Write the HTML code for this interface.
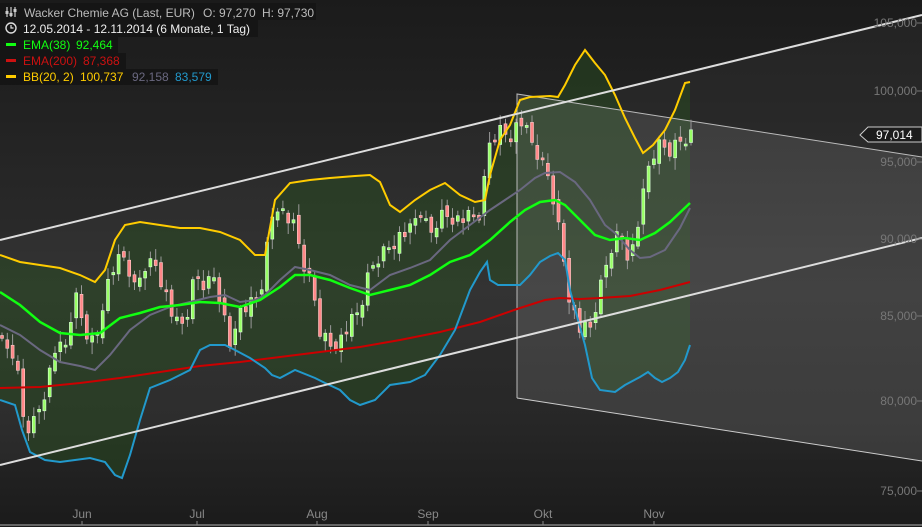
<!DOCTYPE html>
<html><head><meta charset="utf-8"><style>
html,body{margin:0;padding:0;width:922px;height:527px;overflow:hidden;background:#1c1c1c}
svg{display:block}
text{font-family:"Liberation Sans",sans-serif;font-size:12px}
</style></head><body>
<svg id="s" width="922" height="527" viewBox="0 0 922 527">
<defs>
<linearGradient id="bg" x1="0" y1="0" x2="0" y2="1">
<stop offset="0" stop-color="#1b1b1b"/><stop offset="0.55" stop-color="#2d2d2d"/><stop offset="0.8" stop-color="#272727"/><stop offset="1" stop-color="#1b1b1b"/>
</linearGradient>
</defs>
<rect width="922" height="527" fill="url(#bg)"/>
<polygon points="0,240 922,15 922,238 0,465" fill="rgba(255,255,255,0.03)"/>
<polygon id="bbfill" fill="rgba(40,80,30,0.45)"/>
<polygon points="517,94 922,157 922,461 517,398" fill="rgba(255,255,255,0.1)"/>
<polyline points="517,398 517,94 922,157" fill="none" stroke="#bbb" stroke-width="1"/>
<line x1="517" y1="398" x2="922" y2="461" stroke="#ccc" stroke-width="1"/>
<g id="candles"></g>
<polyline id="mid" fill="none" stroke="#6a6880" stroke-width="2"/>
<polyline id="ema200" fill="none" stroke="#c00" stroke-width="2"/>
<polyline id="ema38" fill="none" stroke="#1f1" stroke-width="2.5"/>
<polyline id="up" fill="none" stroke="#fc0" stroke-width="2"/>
<polyline id="lo" fill="none" stroke="#29c" stroke-width="2"/>
<line x1="0" y1="240" x2="922" y2="15" stroke="#ddd" stroke-width="2"/>
<line x1="0" y1="465" x2="922" y2="238" stroke="#ddd" stroke-width="2"/>
<g fill="#777" text-anchor="end">
<text x="917" y="27">105,000</text><text x="917" y="95">100,000</text>
<text x="917" y="166">95,000</text><text x="917" y="243">90,000</text>
<text x="917" y="320">85,000</text><text x="917" y="405">80,000</text>
<text x="917" y="495">75,000</text>
</g>
<g stroke="#777"><line x1="917" y1="23" x2="922" y2="23"/><line x1="917" y1="91" x2="922" y2="91"/><line x1="917" y1="162" x2="922" y2="162"/><line x1="917" y1="239" x2="922" y2="239"/><line x1="917" y1="316" x2="922" y2="316"/><line x1="917" y1="401" x2="922" y2="401"/><line x1="917" y1="491" x2="922" y2="491"/></g>
<polygon points="860,135 868,127 922,127 922,142 868,142" fill="#1c1c1c" stroke="#ccc"/>
<text x="876" y="139" fill="#fff">97,014</text>
<line x1="0" y1="525" x2="922" y2="525" stroke="#666" stroke-width="2"/>
<g fill="#888" text-anchor="middle">
<text x="82" y="518">Jun</text><text x="197" y="518">Jul</text><text x="317" y="518">Aug</text><text x="428" y="518">Sep</text><text x="543" y="518">Okt</text><text x="654" y="518">Nov</text>
</g>
<g stroke="#888"><line x1="82" y1="521" x2="82" y2="525"/><line x1="197" y1="521" x2="197" y2="525"/><line x1="317" y1="521" x2="317" y2="525"/><line x1="428" y1="521" x2="428" y2="525"/><line x1="543" y1="521" x2="543" y2="525"/><line x1="654" y1="521" x2="654" y2="525"/></g>
<g fill="rgba(20,20,20,0.85)">
<rect x="0" y="3" width="316" height="17"/><rect x="0" y="20" width="258" height="17"/>
<rect x="0" y="37" width="118" height="16"/><rect x="0" y="53" width="126" height="16"/><rect x="0" y="69" width="218" height="16"/>
</g>
<g stroke="#ccc" stroke-width="1.2"><line x1="7" y1="7" x2="7" y2="17"/><line x1="11" y1="7" x2="11" y2="17"/><line x1="15" y1="7" x2="15" y2="17"/></g>
<g fill="#ccc"><rect x="5.5" y="11" width="3" height="3"/><rect x="9.5" y="13" width="3" height="3"/><rect x="13.5" y="9" width="3" height="3"/></g>
<circle cx="11" cy="28" r="5" fill="none" stroke="#ddd" stroke-width="1.4"/>
<path d="M11 25 V28 H13.5" fill="none" stroke="#ddd" stroke-width="1.2"/>
<text y="17" fill="#bbb"><tspan x="24">Wacker Chemie AG (Last, EUR)</tspan><tspan x="203">O: 97,270</tspan><tspan x="262">H: 97,730</tspan></text>
<text x="23" y="33" fill="#eee">12.05.2014 - 12.11.2014 (6 Monate, 1 Tag)</text>
<rect x="6" y="43" width="10" height="3" fill="#1f1"/><text y="49" fill="#1f1"><tspan x="23">EMA(38)</tspan><tspan x="76">92,464</tspan></text>
<rect x="6" y="59" width="10" height="3" fill="#c11"/><text y="65" fill="#c11"><tspan x="23">EMA(200)</tspan><tspan x="83">87,368</tspan></text>
<rect x="6" y="75" width="10" height="3" fill="#fc0"/><text y="81" fill="#fc0"><tspan x="23">BB(20, 2)</tspan><tspan x="80">100,737</tspan><tspan x="132" fill="#6a6880">92,158</tspan><tspan x="175" fill="#29c">83,579</tspan></text>
</svg>
<script>
var up=[[0,255],[20,262],[40,265],[60,268],[80,275],[95,282],[105,270],[115,240],[125,225],[140,222],[160,225],[180,228],[200,228],[220,232],[240,240],[255,255],[265,255],[275,200],[290,183],[310,180],[330,178],[355,176],[370,175],[380,182],[390,205],[400,212],[415,200],[430,190],[445,183],[460,195],[475,202],[485,200],[490,175],[500,140],[510,125],[520,100],[530,97],[550,96],[558,97],[565,85],[575,65],[585,50],[595,63],[605,75],[615,95],[625,118],[635,138],[643,153],[653,145],[665,130],[675,110],[685,83],[690,82]];
var lo=[[0,400],[15,405],[22,430],[30,452],[45,460],[60,462],[75,460],[90,458],[105,462],[115,475],[122,478],[130,455],[140,420],[150,388],[170,380],[190,370],[200,350],[210,345],[225,345],[235,350],[250,358],[265,368],[272,375],[280,378],[295,370],[315,378],[325,383],[340,390],[350,400],[360,405],[375,400],[390,385],[410,382],[425,375],[440,355],[455,330],[470,290],[480,272],[487,262],[490,280],[498,285],[510,285],[520,285],[530,275],[540,262],[550,256],[558,253],[565,260],[570,290],[578,320],[585,345],[592,378],[600,390],[615,392],[625,385],[640,377],[648,372],[655,378],[662,382],[670,378],[678,372],[685,360],[690,345]];
var mid=[[0,325],[20,335],[40,350],[60,362],[80,366],[95,370],[110,355],[130,330],[150,315],[170,307],[190,302],[210,297],[225,295],[240,302],[255,300],[265,295],[280,280],[295,267],[310,270],[330,275],[350,285],[370,290],[390,275],[410,268],[430,260],[450,240],[470,225],[490,210],[505,200],[520,190],[535,178],[545,173],[560,172],[575,182],[590,200],[605,225],[615,233],[630,250],[640,258],[650,257],[665,250],[680,228],[690,208]];
var e38=[[0,292],[20,305],[40,322],[60,333],[80,335],[100,333],[120,318],[140,313],[160,307],[180,305],[200,302],[220,303],[240,307],[260,300],[280,287],[295,275],[310,275],[330,280],[350,288],[370,295],[390,290],[410,285],[430,275],[450,262],[470,255],[490,240],[510,222],[525,210],[540,202],[555,200],[565,205],[580,220],[595,235],[610,240],[625,238],[640,240],[655,233],[670,222],[690,203]];
var e200=[[0,388],[40,387],[80,383],[120,378],[160,372],[200,366],[240,362],[280,357],[320,352],[360,347],[400,340],[440,332],[480,322],[520,308],[545,300],[560,298],[580,299],[600,298],[630,296],[660,290],[690,282]];
function s(a){return a.map(function(p){return p.join(',')}).join(' ')}
document.getElementById('up').setAttribute('points',s(up));
document.getElementById('lo').setAttribute('points',s(lo));
document.getElementById('mid').setAttribute('points',s(mid));
document.getElementById('ema38').setAttribute('points',s(e38));
document.getElementById('ema200').setAttribute('points',s(e200));
document.getElementById('bbfill').setAttribute('points',s(up)+' '+s(lo.slice().reverse()));
var cl=[[0,345],[15,355],[25,430],[35,420],[45,390],[55,350],[65,350],[75,295],[85,330],[95,345],[105,290],[115,265],[125,258],[135,290],[145,265],[155,262],[165,290],[175,325],[185,325],[195,275],[205,285],[215,275],[225,320],[232,355],[240,310],[250,305],[260,295],[268,240],[275,200],[285,215],[295,230],[305,270],[312,285],[320,330],[330,345],[340,340],[350,325],[360,310],[370,270],[380,255],[390,245],[400,235],[410,232],[420,210],[430,235],[440,215],[450,215],[460,220],[470,218],[480,215],[490,140],[500,130],[510,135],[520,120],[530,140],[540,160],[550,180],[560,235],[570,300],[580,330],[590,330],[600,290],[610,250],[620,230],[630,260],[640,215],[650,160],[660,145],[670,150],[680,140],[690,133]];
function interp(x){for(var i=1;i<cl.length;i++){if(x<=cl[i][0]){var a=cl[i-1],b=cl[i];return a[1]+(b[1]-a[1])*(x-a[0])/(b[0]-a[0]);}}return cl[cl.length-1][1];}
(function(){
var g=document.getElementById('candles'),prev=340,h='';
for(var i=0;i<131;i++){var x=2+5.3*i;if(x>692)break;var c=interp(x)+((i*37)%11-5)*1.6;var o=prev+((i*53)%7-3)*1.5;var hi=Math.min(o,c)-3-(i*13)%9;var lw=Math.max(o,c)+3+(i*17)%10;
var upc=c<o;var ty=Math.min(o,c),bh=Math.max(Math.abs(o-c),2);
h+='<line x1="'+x+'" y1="'+hi+'" x2="'+x+'" y2="'+lw+'" stroke="#999" stroke-width="1"/>';
h+='<rect x="'+(x-1.5)+'" y="'+ty+'" width="3" height="'+bh+'" fill="'+(upc?'#9f6':'#f88')+'" stroke="'+(upc?'#dfd':'#fcc')+'" stroke-width="0.6"/>';prev=c;}
g.innerHTML=h;
})();
</script>
</body></html>
